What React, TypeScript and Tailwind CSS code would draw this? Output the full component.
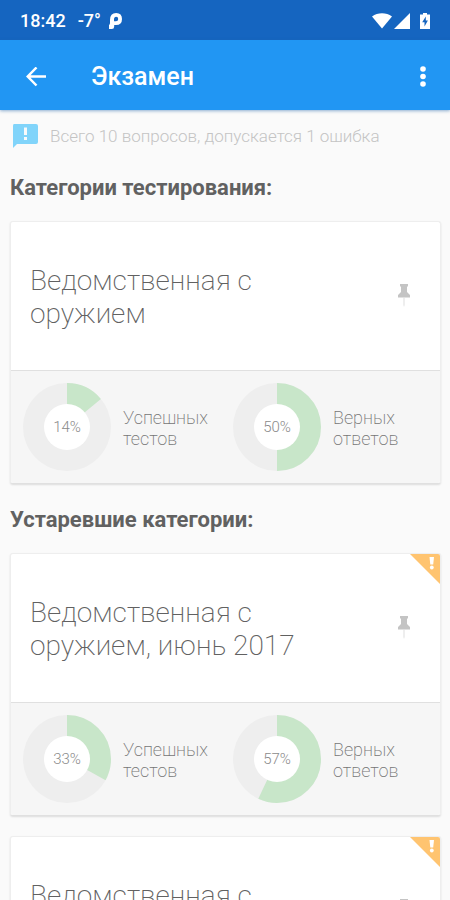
type Category = {
  id: number;
  title: string;
  passed: number;
  correct: number;
  outdated?: boolean;
};

const currentCategories: Category[] = [
  { id: 1, title: "Ведомственная с оружием", passed: 14, correct: 50 },
];

const outdatedCategories: Category[] = [
  { id: 2, title: "Ведомственная с оружием, июнь 2017", passed: 33, correct: 57, outdated: true },
  { id: 3, title: "Ведомственная с оружием", passed: 0, correct: 0, outdated: true },
];

function StatusBar() {
  return (
    <div className="flex h-10 shrink-0 items-center bg-[#1565c0] px-5 pt-0.5 text-lg leading-5 font-medium text-white">
      <span>18:42</span>
      <span className="ml-3">-7°</span>
      <svg viewBox="0 0 14 16" className="ml-2 h-4 w-[14px]" fill="currentColor">
        <path
          fillRule="evenodd"
          d="M1 7Q1 0 7.200 0Q13 0 13 6Q13 12 7 12H5.200V13.500Q5.200 16 2.800 16H0V12Q1 11.500 1 10ZM5 8.300H7Q9.200 8.300 9.200 6Q9.200 3.800 7.200 3.800Q5 3.800 5 6.500Z"
        />
      </svg>
      <div className="ml-auto flex items-center">
        <svg viewBox="0 0 20 16" className="h-4 w-5" fill="currentColor">
          <path d="M0 3.500C5.800-.7 14.200-.7 20 3.500L10 15.500Z" />
        </svg>
        <svg viewBox="0 0 16 16" className="ml-0.5 h-4 w-4" fill="currentColor">
          <path d="M16 0V16H0Z" />
        </svg>
        <svg viewBox="0 0 10 16" className="ml-2.5 h-4 w-[10px]" fill="currentColor">
          <path d="M3 0H7V1.500H10V16H0V1.500H3Z" />
          <path d="M5.800 3.500 2.200 9.300H4.500V13.500L7.900 7.600H5.800Z" fill="#1565c0" />
        </svg>
      </div>
    </div>
  );
}

function AppBar() {
  return (
    <header className="z-10 flex h-[70px] shrink-0 items-center bg-[#2196f3] px-6 pt-1 text-white shadow-[0_1px_3px_rgba(33,100,170,0.5)]">
      <button type="button" aria-label="Назад" className="flex h-12 w-6 items-center justify-center">
        <svg viewBox="0 0 20 20" className="h-5 w-5" fill="none" stroke="currentColor" strokeWidth="2.500">
          <path d="M20 9.500H2M10.500 .5 1.700 9.500l8.800 9" />
        </svg>
      </button>
      <h1 className="ml-[43px] text-[25px] leading-8 font-medium">Экзамен</h1>
      <button type="button" aria-label="Меню" className="ml-auto flex h-12 w-1.5 items-center justify-center">
        <svg viewBox="0 0 6 22" className="h-[22px] w-1.5 shrink-0" fill="currentColor">
          <circle cx="3" cy="3" r="2.800" />
          <circle cx="3" cy="10.500" r="2.800" />
          <circle cx="3" cy="18" r="2.800" />
        </svg>
      </button>
    </header>
  );
}

function Donut({ value }: { value: number }) {
  return (
    <svg viewBox="0 0 88 88" className="h-[88px] w-[88px] shrink-0">
      <circle cx="44" cy="44" r="44" fill="#eeeeee" />
      <circle
        cx="44"
        cy="44"
        r="33"
        fill="none"
        stroke="#c8e6c9"
        strokeWidth="22"
        pathLength="100"
        strokeDasharray={`${value} 100`}
        transform="rotate(-90 44 44)"
      />
      <circle cx="44" cy="44" r="23" fill="#ffffff" />
      <text x="44" y="49" textAnchor="middle" className="fill-[#8a8a8a] text-[15px] font-light">
        {value}%
      </text>
    </svg>
  );
}

function Stat({ value, label }: { value: number; label: string }) {
  return (
    <div className="flex items-center gap-3 py-3 pl-3">
      <Donut value={value} />
      <p className="w-min pt-0.5 text-lg leading-[21px] font-extralight text-[#757575]">{label}</p>
    </div>
  );
}

function CategoryCard({ category }: { category: Category }) {
  return (
    <article className="relative overflow-hidden rounded-[3px] border border-[#eeeeee] border-b-[#e0e0e0] bg-white shadow-[0_1px_2px_rgba(0,0,0,0.12)]">
      {category.outdated && (
        <svg viewBox="0 0 30 30" className="absolute top-0 right-0 h-[30px] w-[30px]">
          <path d="M0 0H30V30Z" fill="#ffc470" />
          <path d="M19.500 3H24L23.200 10.500H20.300Z" fill="#ffffff" />
          <circle cx="21.800" cy="13.500" r="1.900" fill="#ffffff" />
        </svg>
      )}
      <div className="flex min-h-[148px] items-center justify-between pr-7 pl-[19px]">
        <h3 className="max-w-[280px] pt-0.5 text-[28px] leading-[33px] font-extralight text-[#616161]">
          {category.title}
        </h3>
        <button type="button" aria-label="Закрепить" className="flex h-12 w-4 items-center justify-center">
          <svg viewBox="0 0 14 24" className="h-6 w-[14px] shrink-0">
            <path d="M3 0H11V2L10 3V8L13 11V13.500H1V11L4 8V3L3 2Z" fill="#c4c4c4" />
            <path d="M6.500 13.500H7.500V21L7 23L6.500 21Z" fill="#dddddd" />
          </svg>
        </button>
      </div>
      <div className="grid grid-cols-2 border-t border-[#e0e0e0] bg-[#f6f6f6] pr-[9px]">
        <Stat value={category.passed} label="Успешных тестов" />
        <Stat value={category.correct} label="Верных ответов" />
      </div>
    </article>
  );
}

export default function App() {
  return (
    <div className="flex h-screen flex-col bg-[#fafafa] font-[Roboto,sans-serif]">
      <StatusBar />
      <AppBar />
      <main className="flex-1 overflow-y-auto pt-3 pr-[9px] pb-5 pl-2.5 [scrollbar-width:none]">
        {/* Подсказка */}
        <div className="flex items-center gap-3 pl-0.5">
          <svg viewBox="0 0 26 26" className="h-[26px] w-[26px] shrink-0">
            <path d="M2 1H24Q26 1 26 3V19Q26 21 24 21H5L1 25V3Q1 1 2 1Z" fill="#81d4fa" />
            <path d="M12 4.500H15V12H12ZM12 14H15V17H12Z" fill="#fafafa" />
          </svg>
          <p className="text-[17px] leading-7 font-light text-[#c4c4c4]">
            Всего 10 вопросов, допускается 1 ошибка
          </p>
        </div>

        {/* Актуальные категории */}
        <h2 className="mt-6 text-[22px] leading-7 font-bold text-[#616161]">Категории тестирования:</h2>
        <div className="mt-[19px] flex flex-col gap-5">
          {currentCategories.map((category) => (
            <CategoryCard key={category.id} category={category} />
          ))}
        </div>

        {/* Устаревшие категории */}
        <h2 className="mt-[22px] text-[22px] leading-7 font-bold text-[#616161]">Устаревшие категории:</h2>
        <div className="mt-[19px] flex flex-col gap-5">
          {outdatedCategories.map((category) => (
            <CategoryCard key={category.id} category={category} />
          ))}
        </div>
      </main>
    </div>
  );
}
